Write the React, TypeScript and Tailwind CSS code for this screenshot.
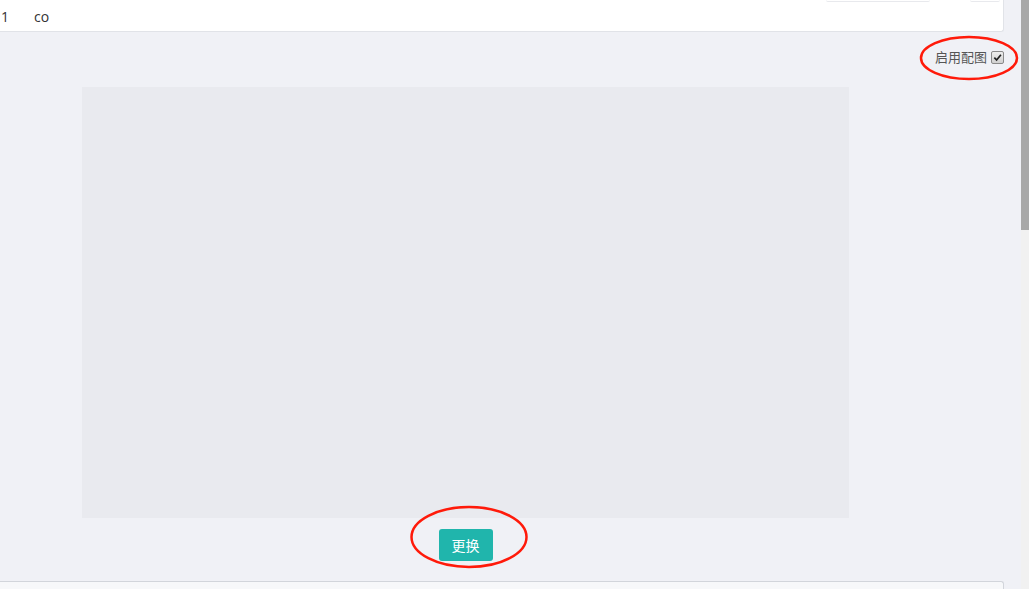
import React from "react";

export default function App() {
  return (
    <div className="flex h-[589px] w-[1029px] overflow-hidden bg-[#f0f1f6] font-['Open_Sans','Noto_Sans_CJK_SC',sans-serif]">
      {/* main column */}
      <div className="relative flex w-[1021px] flex-col">
        {/* top card */}
        <div className="relative h-[32px] w-[1004px] shrink-0 rounded-br-[3px] border-b border-r border-[#e1e3e8] bg-white">
          <div className="absolute left-[826px] top-0 h-[2px] w-[104px] rounded-b-[8px] border-b border-[#e8e9ed]" />
          <div className="absolute left-[970px] top-0 h-[2px] w-[30px] rounded-b-[8px] border-b border-[#e8e9ed]" />
          <div className="flex h-full items-center pt-[2px] text-[14px] text-[#333]">
            <span className="w-[34px] pl-[1px]">1</span>
            <span>co</span>
          </div>
        </div>

        {/* picture section */}
        <div className="flex w-[1004px] flex-col">
          <div className="flex h-[55px] items-start justify-end pt-[16px]">
            <label className="flex items-center gap-[4px] text-[13px] text-[#555]">
              启用配图
              <span className="flex h-[13px] w-[13px] items-center justify-center rounded-[2px] border border-[#8a8a8a] bg-gradient-to-b from-[#eee] to-[#d0d0d0]">
                <svg width="9" height="9" viewBox="0 0 10 10">
                  <path d="M1.5 5.2 L4 7.8 L8.8 2" fill="none" stroke="#222" strokeWidth="1.9" />
                </svg>
              </span>
            </label>
          </div>
          <div className="ml-[82px] h-[431px] w-[767px] bg-[#e9eaef]" />
          <div className="ml-[82px] flex w-[767px] justify-center pt-[11px]">
            <button className="h-[32px] w-[54px] rounded-[3px] bg-[#20b5ac] text-[14px] text-white">
              更换
            </button>
          </div>
        </div>

        {/* bottom card */}
        <div className="mt-[20px] h-[20px] w-[1004px] shrink-0 rounded-tr-[3px] border-r border-t border-[#d2d5db] bg-[#f7f8fa]" />

        {/* annotations */}
        <svg className="pointer-events-none absolute left-0 top-0" width="1021" height="589">
          <ellipse cx="969" cy="58" rx="48" ry="21" fill="none" stroke="#ff1a0a" strokeWidth="2.5" />
          <ellipse cx="469" cy="537" rx="57.5" ry="30" fill="none" stroke="#ff1a0a" strokeWidth="2.5" />
        </svg>
      </div>

      {/* scrollbar */}
      <div className="flex w-[8px] flex-col bg-[#f1f1f1]">
        <div className="h-[230px] w-full bg-[#a8a8a8]" />
      </div>
    </div>
  );
}
